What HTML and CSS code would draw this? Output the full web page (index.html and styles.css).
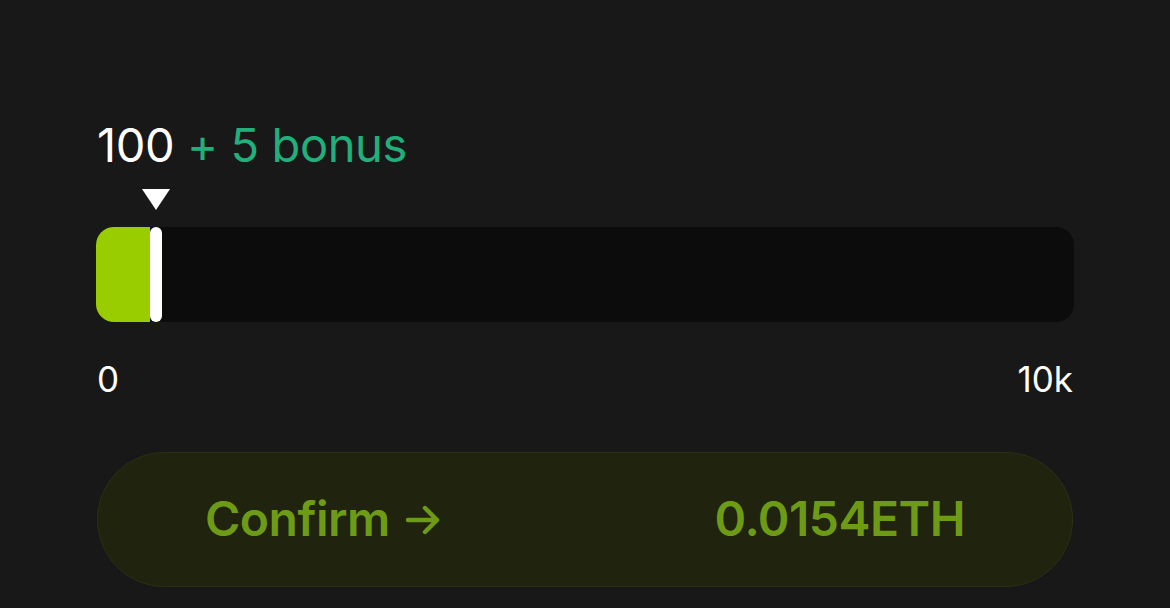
FILE: index.html
```html
<!DOCTYPE html>
<html>
<head>
<meta charset="utf-8">
<link rel="stylesheet" href="styles.css">
</head>
<body>
<div class="panel">
  <div class="amount"><span class="base">100</span> <span class="bonus">+ 5 bonus</span></div>
  <div class="pointer-row"><span class="pointer"></span></div>
  <div class="track">
    <div class="fill" style="width: 54px"></div>
    <div class="handle"></div>
  </div>
  <div class="scale"><span>0</span><span>10k</span></div>
  <button class="confirm">
    <span class="label">Confirm <svg class="arrow" width="36" height="32" viewBox="0 0 36 32"><path d="M3 16 H32 M20 4 L32 16 L20 28" fill="none" stroke="currentColor" stroke-width="4.4" stroke-linecap="round" stroke-linejoin="round"/></svg></span>
    <span class="price">0.0154ETH</span>
  </button>
</div>
</body>
</html>
```
FILE: styles.css
```css
html, body {
  margin: 0;
  padding: 0;
  background: #181818;
  width: 1170px;
  height: 608px;
  overflow: hidden;
  font-family: Inter, "Noto Sans", sans-serif;
}
.panel {
  padding: 117px 96px 0 96px;
  display: flex;
  flex-direction: column;
}
.amount {
  font-size: 47px;
  line-height: 56px;
  letter-spacing: -0.4px;
  padding-left: 1px;
}
.base { color: #ffffff; }
.bonus { color: #21b07c; }
.pointer-row {
  height: 40px;
  position: relative;
  margin-top: 14px;
}
.pointer {
  position: absolute;
  left: 46px;
  top: 2px;
  width: 0;
  height: 0;
  border-left: 14px solid transparent;
  border-right: 14px solid transparent;
  border-top: 21px solid #ffffff;
}
.track {
  height: 95px;
  background: #0c0c0c;
  border-radius: 18px;
  display: flex;
  align-items: stretch;
}
.fill {
  background: #9acd00;
  border-radius: 18px 0 0 18px;
}
.handle {
  width: 12px;
  background: #ffffff;
  border-radius: 6px;
}
.scale {
  display: flex;
  justify-content: space-between;
  color: #ffffff;
  font-size: 35px;
  line-height: 42px;
  margin-top: 36px;
  padding: 0 1px 0 1px;
}
.confirm {
  margin-top: 52px;
  margin-left: 1px;
  margin-right: 1px;
  height: 135px;
  border-radius: 68px;
  background: #20230e;
  border: 1.5px solid #2a3012;
  display: flex;
  align-items: center;
  justify-content: space-between;
  padding: 0 107px 2px 107px;
  font-family: Inter, "Noto Sans", sans-serif;
  font-size: 48px;
  font-weight: 600;
  color: #6e9b15;
  letter-spacing: -0.5px;
}
.label {
  display: flex;
  align-items: center;
  gap: 15px;
}
.arrow { margin-top: 2px; }
```
